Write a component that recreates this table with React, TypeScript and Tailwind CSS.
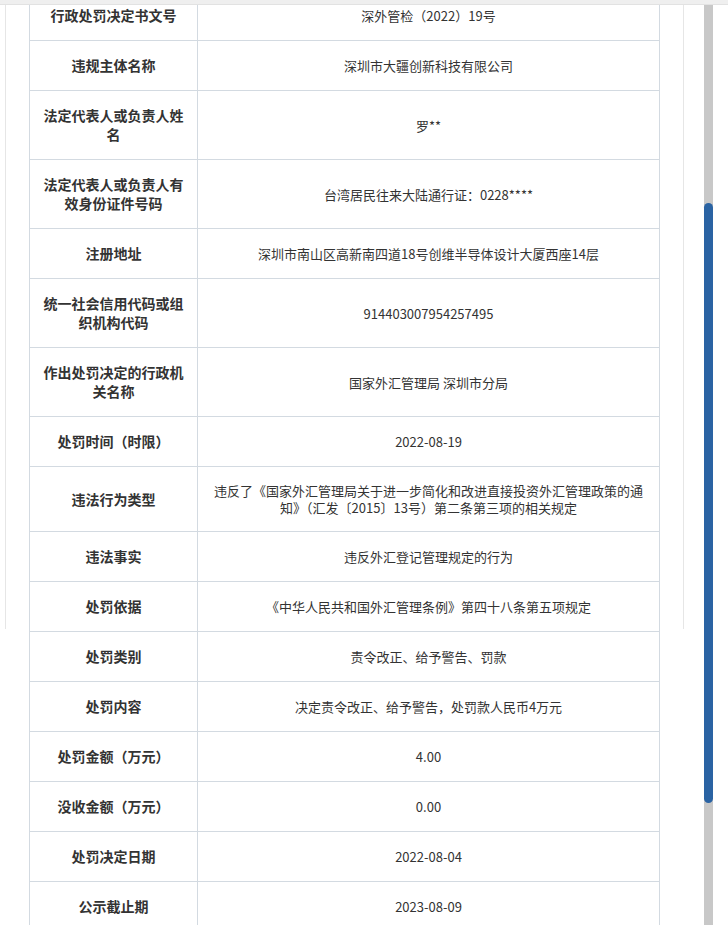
import React from 'react';

const rows: { label: string; value: string }[] = [
  { label: '行政处罚决定书文号', value: '深外管检（2022）19号' },
  { label: '违规主体名称', value: '深圳市大疆创新科技有限公司' },
  { label: '法定代表人或负责人姓名', value: '罗**' },
  { label: '法定代表人或负责人有效身份证件号码', value: '台湾居民往来大陆通行证：0228****' },
  { label: '注册地址', value: '深圳市南山区高新南四道18号创维半导体设计大厦西座14层' },
  { label: '统一社会信用代码或组织机构代码', value: '914403007954257495' },
  { label: '作出处罚决定的行政机关名称', value: '国家外汇管理局 深圳市分局' },
  { label: '处罚时间（时限）', value: '2022-08-19' },
  {
    label: '违法行为类型',
    value:
      '违反了《国家外汇管理局关于进一步简化和改进直接投资外汇管理政策的通知》（汇发〔2015〕13号）第二条第三项的相关规定',
  },
  { label: '违法事实', value: '违反外汇登记管理规定的行为' },
  { label: '处罚依据', value: '《中华人民共和国外汇管理条例》第四十八条第五项规定' },
  { label: '处罚类别', value: '责令改正、给予警告、罚款' },
  { label: '处罚内容', value: '决定责令改正、给予警告，处罚款人民币4万元' },
  { label: '处罚金额（万元）', value: '4.00' },
  { label: '没收金额（万元）', value: '0.00' },
  { label: '处罚决定日期', value: '2022-08-04' },
  { label: '公示截止期', value: '2023-08-09' },
];

export default function App() {
  return (
    <div
      className="w-[728px] h-[931px] bg-white overflow-hidden text-[#333]"
      style={{ fontFamily: '"Microsoft YaHei", "Noto Sans CJK SC", "Noto Sans", sans-serif' }}
    >
      {/* top strip */}
      <div className="h-[5px] bg-[#efefef] border-b border-[#e2e2e2]" />

      <div className="flex h-[920px]">
        {/* page area */}
        <div className="relative w-[704px] h-full overflow-hidden">
          {/* faint outline of the panel behind */}
          <div className="absolute left-[5px] top-0 w-[679px] h-[624px] border-x border-[#e6e6e6]" />

          <table className="relative ml-[29px] -mt-[15px] w-[631px] border-collapse table-fixed">
            <colgroup>
              <col className="w-[168px]" />
              <col />
            </colgroup>
            <tbody>
              {rows.map((r) => (
                <tr key={r.label}>
                  <td className="border border-[#d3dae1] px-[10px] py-[15px] text-center align-middle text-[14px] leading-[19px] font-bold text-[#333]">
                    {r.label}
                  </td>
                  <td className="border border-[#d3dae1] px-[12px] py-[15px] text-center align-middle text-[13px] leading-[17px] text-[#333]">
                    {r.value}
                  </td>
                </tr>
              ))}
            </tbody>
          </table>
        </div>

        {/* scrollbar */}
        <div className="w-[9px] h-full bg-[#c8c8c8] pt-[198px]">
          <div className="h-[600px] bg-[#2a63a3] rounded-[5px]" />
        </div>
      </div>
    </div>
  );
}
